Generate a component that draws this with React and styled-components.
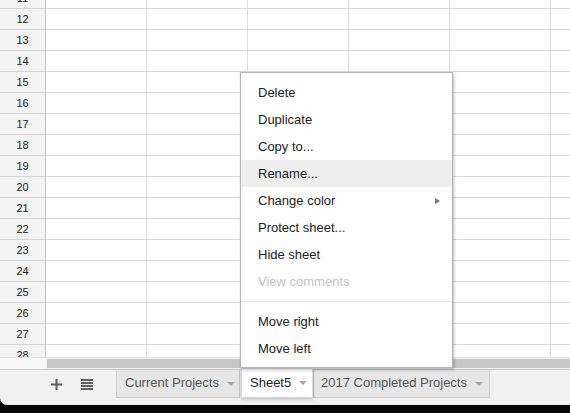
import React from "react";
import styled, { createGlobalStyle } from "styled-components";

const Global = createGlobalStyle`
  html, body { margin: 0; padding: 0; background: #000; }
  body { width: 570px; height: 413px; overflow: hidden; font-family: Arial, "Liberation Sans", sans-serif; }
  #root { width: 570px; height: 413px; }
`;

const Frame = styled.div`
  position: relative;
  width: 570px;
  height: 413px;
  display: flex;
  flex-direction: column;
  background: #000;
  overflow: hidden;
`;

const GridArea = styled.div`
  height: 357px;
  flex: none;
  overflow: hidden;
  background: #fff;
`;

const GridBody = styled.div`
  margin-top: -12px;
  display: flex;
  flex-direction: column;
`;

const Row = styled.div`
  display: flex;
  height: 21px;
  flex: none;
`;

const RowHeader = styled.div`
  width: 45px;
  flex: none;
  height: 20px;
  background: #f3f3f3;
  border-right: 1px solid #c4c4c4;
  border-bottom: 1px solid #d4d4d4;
  display: flex;
  align-items: center;
  justify-content: center;
  font-size: 11px;
  color: #222;
`;

const Cell = styled.div`
  width: 100px;
  flex: none;
  height: 20px;
  border-right: 1px solid #dadada;
  border-bottom: 1px solid #dadada;
`;

const ScrollStrip = styled.div`
  height: 12px;
  flex: none;
  display: flex;
  background: #fff;
`;

const ScrollCorner = styled.div`
  width: 46px;
  flex: none;
  background: #f8f8f8;
  border-top: 1px solid #e2e2e2;
`;

const ScrollTrack = styled.div`
  flex: 1;
  background: #f1f1f1;
  border-top: 1px solid #e2e2e2;
  padding: 1px 0 0 1px;
  display: flex;
`;

const ScrollThumb = styled.div`
  flex: 1;
  height: 9px;
  background: #c6c6c6;
`;

const TabBar = styled.div`
  height: 35px;
  flex: none;
  background: #f1f1f1;
  border-top: 1px solid #c8c8c8;
  border-bottom-left-radius: 7px;
  display: flex;
  align-items: flex-start;
  padding-left: 50px;
`;

const IconButton = styled.div`
  width: ${(p) => p.$w}px;
  height: 29px;
  flex: none;
  display: flex;
  align-items: center;
  justify-content: ${(p) => p.$justify || "center"};
  color: #5f5f5f;
`;

const Tab = styled.div`
  height: ${(p) => (p.$active ? 29 : 28)}px;
  margin-top: ${(p) => (p.$active ? -1 : 0)}px;
  flex: none;
  display: flex;
  align-items: center;
  gap: 8px;
  padding: 0 ${(p) => p.$padR}px 0 ${(p) => p.$padL}px;
  box-sizing: border-box;
  width: ${(p) => p.$w}px;
  background: ${(p) => (p.$active ? "#fff" : "#e6e6e6")};
  border: 1px solid ${(p) => (p.$active ? "#d8d8d8" : "#cdcdcd")};
  border-top: none;
  box-shadow: ${(p) => (p.$active ? "0 1px 3px rgba(0,0,0,0.25)" : "none")};
  color: ${(p) => (p.$active ? "#222" : "#555")};
  font-size: 13px;
  position: relative;
  z-index: ${(p) => (p.$active ? 2 : 1)};
  margin-left: ${(p) => p.$ml || 0}px;
`;

const TabLabel = styled.span`
  flex: 1;
  white-space: nowrap;
  margin-top: -2px;
`;

const Caret = styled.span`
  width: 0;
  height: 0;
  flex: none;
  border-left: 4px solid transparent;
  border-right: 4px solid transparent;
  border-top: 4px solid #a8a8a8;
`;

const Desk = styled.div`
  flex: 1;
  background: #050505;
`;

const Menu = styled.div`
  position: absolute;
  left: 240px;
  top: 72px;
  width: 211px;
  background: #fff;
  border: 1px solid #b4b4b4;
  box-shadow: 1px 2px 3px rgba(0, 0, 0, 0.25);
  padding: 6px 0 5px;
  z-index: 3;
  display: flex;
  flex-direction: column;
`;

const Item = styled.div`
  height: 27px;
  flex: none;
  display: flex;
  align-items: center;
  justify-content: space-between;
  padding: 0 12px 0 17px;
  font-size: 13px;
  color: ${(p) => (p.$disabled ? "#c2c2c2" : "#222")};
  background: ${(p) => (p.$hover ? "#eeeeee" : "transparent")};
`;

const SubArrow = styled.span`
  width: 0;
  height: 0;
  border-top: 3px solid transparent;
  border-bottom: 3px solid transparent;
  border-left: 5px solid #777;
  margin-top: 1px;
`;

const Separator = styled.div`
  height: 1px;
  flex: none;
  background: #e5e5e5;
  margin: 6px 0;
`;

const rows = Array.from({ length: 18 }, (_, i) => 11 + i);
const cols = [0, 1, 2, 3, 4, 5];

const items = [
  { label: "Delete" },
  { label: "Duplicate" },
  { label: "Copy to..." },
  { label: "Rename...", hover: true },
  { label: "Change color", sub: true },
  { label: "Protect sheet..." },
  { label: "Hide sheet" },
  { label: "View comments", disabled: true },
  { sep: true },
  { label: "Move right" },
  { label: "Move left" },
];

export default function App() {
  return (
    <>
      <Global />
      <Frame>
        <GridArea>
          <GridBody>
            {rows.map((r) => (
              <Row key={r}>
                <RowHeader>{r}</RowHeader>
                {cols.map((c) => (
                  <Cell key={c} />
                ))}
              </Row>
            ))}
          </GridBody>
        </GridArea>
        <ScrollStrip>
          <ScrollCorner />
          <ScrollTrack>
            <ScrollThumb />
          </ScrollTrack>
        </ScrollStrip>
        <TabBar>
          <IconButton $w={12}>
            <svg width="11" height="11" viewBox="0 0 11 11">
              <rect x="4.5" y="0" width="2" height="11" fill="#5f5f5f" />
              <rect x="0" y="4.5" width="11" height="2" fill="#5f5f5f" />
            </svg>
          </IconButton>
          <IconButton $w={31} $justify="flex-end">
            <svg width="12" height="11" viewBox="0 0 12 11">
              <rect x="0" y="0" width="12" height="2" fill="#5f5f5f" />
              <rect x="0" y="3" width="12" height="2" fill="#5f5f5f" />
              <rect x="0" y="6" width="12" height="2" fill="#5f5f5f" />
              <rect x="0" y="9" width="12" height="2" fill="#5f5f5f" />
            </svg>
          </IconButton>
          <Tab $w={124} $padL={8} $padR={8} $ml={23}>
            <TabLabel>Current Projects</TabLabel>
            <Caret />
          </Tab>
          <Tab $active $w={72} $padL={8} $padR={8} $ml={1}>
            <TabLabel>Sheet5</TabLabel>
            <Caret />
          </Tab>
          <Tab $w={177} $padL={7} $padR={9}>
            <TabLabel>2017 Completed Projects</TabLabel>
            <Caret />
          </Tab>
        </TabBar>
        <Desk />
        <Menu>
          {items.map((it, i) =>
            it.sep ? (
              <Separator key={i} />
            ) : (
              <Item key={i} $hover={it.hover} $disabled={it.disabled}>
                <span>{it.label}</span>
                {it.sub && <SubArrow />}
              </Item>
            )
          )}
        </Menu>
      </Frame>
    </>
  );
}
